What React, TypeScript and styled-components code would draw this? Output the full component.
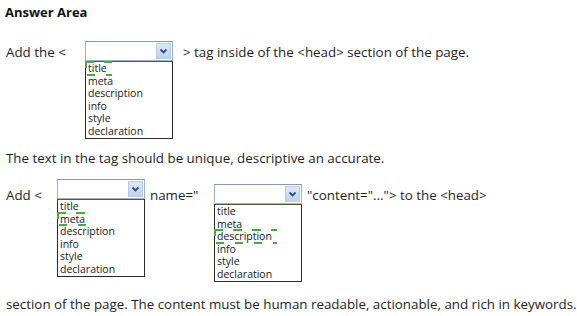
import styled, { createGlobalStyle } from "styled-components";

const GlobalStyle = createGlobalStyle`
  body {
    margin: 0;
    background: #fff;
    color: #1e1e1e;
    font-family: "Open Sans", "Noto Sans", sans-serif;
  }
`;

const SPage = styled.div`
  padding: 4px 0 0 6px;
  width: 577px;
  height: 316px;
  box-sizing: border-box;
  overflow: hidden;
`;

const STitle = styled.h3`
  margin: 0 0 0 -1px;
  font-size: 13px;
  line-height: 16px;
  font-weight: 700;
  color: #111;
`;

const SRow = styled.div<{ $top: number }>`
  display: flex;
  align-items: flex-start;
  margin-top: ${({ $top }) => $top}px;
`;

const SText = styled.span<{ $top?: number; $w?: number; $left?: number }>`
  display: block;
  flex: none;
  font-size: 13.35px;
  line-height: 20px;
  white-space: nowrap;
  margin-top: ${({ $top }) => $top ?? 0}px;
  margin-left: ${({ $left }) => $left ?? 0}px;
  width: ${({ $w }) => ($w ? `${$w}px` : "auto")};
`;

const SPara = styled.p<{ $top: number }>`
  margin: ${({ $top }) => $top}px 0 0;
  font-size: 13.35px;
  line-height: 20px;
  white-space: nowrap;
`;

const SDropdown = styled.div<{ $top?: number }>`
  display: flex;
  flex-direction: column;
  flex: none;
  width: 88px;
  margin-top: ${({ $top }) => $top ?? 0}px;
`;

const SSelect = styled.div`
  height: 20px;
  box-sizing: border-box;
  border: 1px solid #9fb3c8;
  border-top-color: #7f9bb8;
  background: #fff;
  display: flex;
  justify-content: flex-end;
  align-items: stretch;
  padding: 1px;
`;

const SArrow = styled.div`
  width: 15px;
  box-sizing: border-box;
  border: 1px solid #b7cbe6;
  background: linear-gradient(#dde9f8, #bcd2ef);
  display: flex;
  align-items: center;
  justify-content: center;
`;

const SList = styled.ul`
  list-style: none;
  margin: 0;
  padding: 0 0 1px;
  border: 1px solid #2a2a2a;
  border-top-color: #555;
  background: #fff;
`;

const SOption = styled.li`
  font-size: 10.5px;
  line-height: 12.5px;
  height: 12.5px;
  padding-left: 2px;
  color: #1a1a1a;
`;

const SMarked = styled.span`
  position: relative;
  display: inline-block;
  height: 12.5px;
  &::before {
    content: "";
    position: absolute;
    left: -3px;
    right: -5px;
    top: -1px;
    height: 2px;
    background: repeating-linear-gradient(to right, #4aa84a 0 9px, transparent 9px 19px);
  }
  &::after {
    content: "";
    position: absolute;
    left: -1px;
    right: -5px;
    bottom: -1px;
    height: 2px;
    background: repeating-linear-gradient(to right, #4aa84a 0 8px, transparent 8px 19px);
  }
`;

const SMarkEdge = styled.i`
  position: absolute;
  left: -3px;
  top: -1px;
  width: 2px;
  height: 7px;
  background: #4aa84a;
`;

const Chevron = () => (
  <svg width="9" height="7" viewBox="0 0 9 7">
    <polyline points="1.5,1.5 4.5,4.5 7.5,1.5" fill="none" stroke="#2b4d85" strokeWidth="1.8" />
  </svg>
);

const OPTIONS = ["title", "meta", "description", "info", "style", "declaration"];

const Dropdown = ({ answer, top }: { answer: string; top?: number }) => (
  <SDropdown $top={top}>
    <SSelect>
      <SArrow>
        <Chevron />
      </SArrow>
    </SSelect>
    <SList>
      {OPTIONS.map((o) => (
        <SOption key={o}>
          {o === answer ? (
            <SMarked>
              <SMarkEdge />
              {o}
            </SMarked>
          ) : (
            o
          )}
        </SOption>
      ))}
    </SList>
  </SDropdown>
);

export default function App() {
  return (
    <>
      <GlobalStyle />
      <SPage>
        <STitle>Answer Area</STitle>
        <SRow $top={21}>
          <SText $top={1} $w={79}>Add the &lt;</SText>
          <Dropdown answer="title" />
          <SText $top={1} $left={10}>&gt; tag inside of the &lt;head&gt; section of the page.</SText>
        </SRow>
        <SPara $top={9}>The text in the tag should be unique, descriptive an accurate.</SPara>
        <SRow $top={11}>
          <SText $top={6} $w={51}>Add &lt;</SText>
          <Dropdown answer="meta" />
          <SText $top={6} $left={5} $w={64}>name="</SText>
          <Dropdown answer="description" top={5} />
          <SText $top={6} $left={5}>"content="..."&gt; to the &lt;head&gt;</SText>
        </SRow>
        <SPara $top={12}>
          section of the page. The content must be human readable, actionable, and rich in keywords.
        </SPara>
      </SPage>
    </>
  );
}
